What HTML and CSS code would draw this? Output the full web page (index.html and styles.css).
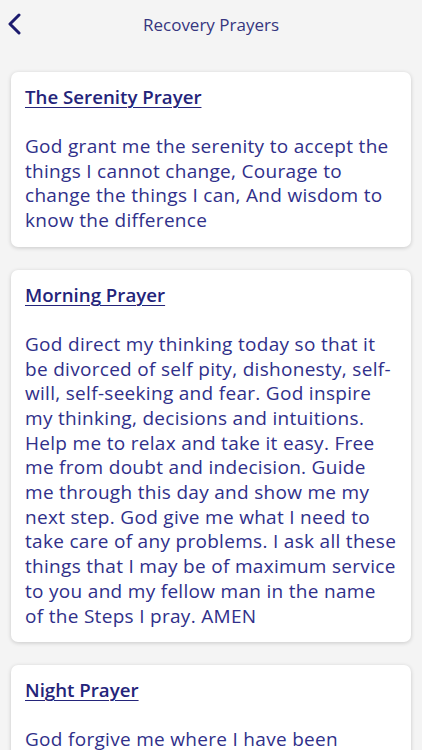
FILE: index.html
```html
<!DOCTYPE html>
<html lang="en">
<head>
    <meta charset="utf-8">
    <meta name="viewport" content="width=device-width, initial-scale=1">
    <title>Recovery Prayers</title>
    <link rel="stylesheet" href="styles.css">
</head>
<body>
<div class="header">
    <a class="back" href="#">
        <svg width="16" height="22" viewBox="0 0 16 22">
            <path d="M12 2 L3 11 L12 20" fill="none" stroke="#1c1b6e" stroke-width="3" stroke-linecap="round" stroke-linejoin="round"/>
        </svg>
    </a>
    <h1>Recovery Prayers</h1>
</div>
<div class="list">
    <div class="card">
        <h2><a href="#">The Serenity Prayer</a></h2>
        <p>God grant me the serenity to accept the things I cannot change, Courage to change the things I can, And wisdom to know the difference</p>
    </div>
    <div class="card">
        <h2><a href="#">Morning Prayer</a></h2>
        <p>God direct my thinking today so that it be divorced of self pity, dishonesty, self-will, self-seeking and fear. God inspire my thinking, decisions and intuitions. Help me to relax and take it easy. Free me from doubt and indecision. Guide me through this day and show me my next step. God give me what I need to take care of any problems. I ask all these things that I may be of maximum service to you and my fellow man in the name of the Steps I pray. AMEN</p>
    </div>
    <div class="card">
        <h2><a href="#">Night Prayer</a></h2>
        <p>God forgive me where I have been resentful, selfish, dishonest or afraid today. Help me to not keep anything to myself but to discuss it all openly with another person. Show me where I owe an apology and help me make it.</p>
    </div>
</div>
</body>
</html>
```

FILE: styles.css
```css
* {
    box-sizing: border-box;
}

body {
    margin: 0;
    background-color: #f4f4f4;
    font-family: "Open Sans", "Noto Sans", sans-serif;
    color: #30308a;
}

.header {
    height: 48px;
    display: flex;
    align-items: center;
    justify-content: center;
    position: relative;
}

.header h1 {
    margin: 0;
    font-size: 17px;
    font-weight: normal;
    color: #36367f;
}

.back {
    position: absolute;
    left: 7px;
    top: 13px;
    display: flex;
}

.list {
    padding: 24px 11px;
    display: flex;
    flex-direction: column;
    gap: 23px;
}

.card {
    background-color: #fff;
    border-radius: 7px;
    box-shadow: 0 1px 4px rgba(0, 0, 0, 0.18);
    padding: 12px 14px 14px;
}

.card h2 {
    margin: 0 0 25px;
    font-size: 18.7px;
    line-height: 25px;
    font-weight: 600;
}

.card h2 a {
    color: #24247a;
    text-decoration: underline;
    text-decoration-thickness: 1px;
    text-underline-offset: 3px;
}

.card p {
    margin: 0;
    font-size: 19px;
    line-height: 24.7px;
    letter-spacing: 0.3px;
    color: #30308a;
}
```
